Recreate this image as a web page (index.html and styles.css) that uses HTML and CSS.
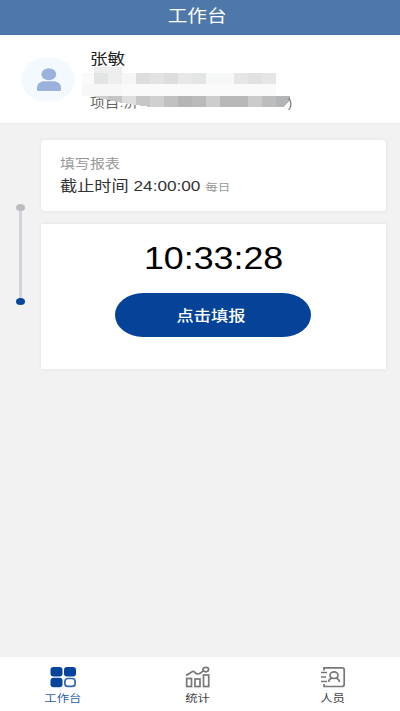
FILE: index.html
```html
<!DOCTYPE html>
<html lang="zh-CN">
<head>
<meta charset="utf-8">
<title>工作台</title>
<link rel="stylesheet" href="styles.css">
</head>
<body>
<header class="topbar"><h1 class="wide center">工作台</h1></header>
<section class="profile">
  <div class="avatar">
    <svg width="24" height="24" viewBox="0 0 24 24"><ellipse cx="11.8" cy="6.2" rx="7.4" ry="6"/><path d="M0 22v-2.500C0 15.500 3.500 13.200 7.500 13.200h9C20.500 13.200 24 15.500 24 19.500V22q0 1-1.200 1H1.200Q0 23 0 22z"/></svg>
  </div>
  <div class="info">
    <div class="name wide">张敏</div>
    <div class="project wide">项目:济</div>
    <svg class="mosaic" width="212" height="44" viewBox="0 0 212 44" shape-rendering="crispEdges">
      <path fill="#fafafa" d="M0 9h12v11H0zM12 20h182v12H12z"/>
      <path fill="#f7f7f7" d="M0 20h40v12H0z"/>
      <path fill="#ededed" d="M12 3h14v6H12zM26 3h14v6H26z"/>
      <path fill="#e3e4e4" d="M12 9h14v11H12z"/><path fill="#eeeeee" d="M26 9h14v11H26z"/>
      <path fill="#f6f6f6" d="M40 9h14v11H40z"/><path fill="#dedede" d="M54 9h14v11H54z"/>
      <path fill="#e3e3e3" d="M68 9h14v11H68z"/><path fill="#dedede" d="M82 9h14v11H82z"/>
      <path fill="#e8e8e8" d="M96 9h14v11H96z"/><path fill="#e4e5e5" d="M110 9h14v11h-14z"/>
      <path fill="#f6f7f7" d="M124 9h28v11h-28z"/><path fill="#e6e6e6" d="M152 9h14v11h-14z"/>
      <path fill="#e0e1e1" d="M166 9h14v11h-14z"/><path fill="#e6e6e6" d="M180 9h14v11h-14z"/>
      <path fill="#cfcfcf" d="M12 32h14v4l-14-3z"/><path fill="#c4c4c4" d="M26 32h14v7l-14-3z"/>
      <path fill="#dedede" d="M40 32h14v9l-14-2z"/><path fill="#c7c7c7" d="M54 32h14v11l-14-2z"/>
      <path fill="#d0d0d0" d="M68 32h14v11H68z"/><path fill="#c1c1c1" d="M82 32h14v11H82z"/>
      <path fill="#b5b5b5" d="M96 32h14v11H96z"/><path fill="#bababa" d="M110 32h14v11h-14z"/>
      <path fill="#cdcdcd" d="M124 32h14v11h-14z"/><path fill="#b8b8b8" d="M138 32h28v11h-28z"/>
      <path fill="#cbcbcb" d="M166 32h14v11h-14z"/><path fill="#bdbdbd" d="M180 32h14v11h-14z"/>
      <path fill="#b3b5b9" d="M194 32h14v4l-6 7h-8z"/>
    </svg>
    <span class="paren">)</span>
  </div>
</section>
<main>
  <div class="timeline"><i class="dot"></i><i class="line"></i><i class="dot active"></i></div>
  <div class="cards">
    <section class="card report">
      <div class="caption wide">填写报表</div>
      <div class="deadline wide">截止时间 24:00:00 <small>每日</small></div>
    </section>
    <section class="card clock">
      <div class="time wide center">10:33:28</div>
      <button><span class="wide center">点击填报</span></button>
    </section>
  </div>
</main>
<nav>
  <a class="tab on">
    <svg width="26" height="22" viewBox="0 0 26 22"><g fill="#07449b"><rect x=".5" y="1" width="12" height="9.500" rx="3"/><rect x="14" y="1" width="12" height="9.500" rx="3"/><rect x=".5" y="11.700" width="12" height="9.500" rx="3"/></g><rect x="14.900" y="12.500" width="10.200" height="7.900" rx="3" fill="#fff" stroke="#3767ae" stroke-width="1.700"/></svg>
    <span class="wide center">工作台</span>
  </a>
  <a class="tab">
    <svg width="26" height="22" viewBox="0 0 26 22" fill="none" stroke="#777" stroke-width="1.700"><rect x="1.700" y="12.500" width="4.800" height="8"/><rect x="10" y="13" width="5" height="7.500"/><rect x="18.500" y="9" width="5.200" height="11.500"/><path d="M1 9.500 7.500 5.500Q9 5 10 6.500T13 8Q16 7.500 18.500 4.500"/><ellipse cx="20.800" cy="3.600" rx="2.800" ry="2.200"/></svg>
    <span class="wide center">统计</span>
  </a>
  <a class="tab">
    <svg width="26" height="22" viewBox="0 0 26 22" fill="none" stroke="#777" stroke-width="1.700"><path d="M4 4.500V1.800h18Q24.200 1.800 24.200 3.800V18.500Q24.200 20.500 22 20.500H4V18M1 6.500h6M1 11h5M1 15.500h6"/><ellipse cx="14" cy="9.200" rx="4" ry="3.300"/><path d="M8.500 15.800Q9 12.500 12.500 12M15.500 12Q19 12.500 19.500 15.800"/></svg>
    <span class="wide center">人员</span>
  </a>
</nav>
</body>
</html>
```
FILE: styles.css
```css
* { box-sizing: border-box; }
body {
  margin: 0;
  width: 400px;
  height: 711px;
  overflow: hidden;
  display: flex;
  flex-direction: column;
  background: #f2f2f2;
  font-family: "Liberation Sans", "Noto Sans CJK SC", sans-serif;
  color: #333;
}
.wide {
  display: block;
  white-space: nowrap;
  transform: scaleX(1.17);
  transform-origin: 0 50%;
}
.center { transform-origin: 50% 50%; }
.topbar {
  height: 35px;
  padding-right: 5px;
  display: flex;
  align-items: center;
  justify-content: center;
  background: #4e77aa;
  border-bottom: 1px solid #456fa5;
}
h1 {
  margin: 0;
  font-size: 16.8px;
  line-height: 24px;
  font-weight: 400;
  color: #fff;
}
.profile {
  height: 89px;
  display: flex;
  padding: 14px 0 0 21px;
  background: #fff;
  border-bottom: 1px solid #ebebeb;
}
.avatar {
  width: 54px;
  height: 45px;
  margin-top: 8px;
  padding-left: 2px;
  border-radius: 50%;
  background: #f4f8ff;
  display: flex;
  align-items: center;
  justify-content: center;
}
.avatar svg { fill: #9bb3dc; }
.info {
  position: relative;
  margin-left: 15px;
  width: 220px;
}
.name {
  font-size: 15px;
  line-height: 20px;
  color: #222;
}
.project {
  margin-top: 25px;
  font-size: 12.6px;
  line-height: 18px;
  color: #666;
}
.mosaic {
  position: absolute;
  left: -8px;
  top: 15px;
}
.paren {
  position: absolute;
  left: 198px;
  top: 47px;
  font-size: 12px;
  line-height: 14px;
  color: #666;
}
main {
  flex: 1;
  display: flex;
  padding: 16px 14px 0 16px;
}
.timeline {
  width: 9px;
  margin-top: 64px;
  display: flex;
  flex-direction: column;
  align-items: center;
}
.dot {
  width: 9px;
  height: 7px;
  border-radius: 50%;
  background: #bcbcc1;
}
.line {
  width: 3px;
  height: 87px;
  background: #d3d3d9;
}
.active { background: #07449b; }
.cards {
  flex: 1;
  margin-left: 16px;
}
.card {
  background: #fff;
  box-shadow: 0 0 4px rgba(0, 0, 0, .07);
}
.report {
  height: 71px;
  padding: 13px 19px;
  border-radius: 4px;
}
.caption {
  font-size: 12.8px;
  line-height: 21px;
  color: #999;
}
.deadline {
  font-size: 14.7px;
  line-height: 24px;
}
small {
  font-size: 10.7px;
  color: #999;
}
.clock {
  height: 145px;
  margin-top: 13px;
  padding: 15px 0 0;
  display: flex;
  flex-direction: column;
  align-items: center;
}
.time {
  font-size: 30.6px;
  line-height: 38px;
  color: #000;
  margin-left: 1px;
}
button {
  width: 196px;
  height: 44px;
  margin: 16px 1px 0 0;
  padding: 0 4px 2px 0;
  border: 0;
  border-radius: 28px / 22px;
  background: #044398;
  color: #fff;
  font-family: inherit;
  font-size: 14.7px;
  font-weight: 500;
}
nav {
  height: 54px;
  display: flex;
  background: #fff;
}
.tab {
  width: 135px;
  flex: none;
  display: flex;
  flex-direction: column;
  align-items: center;
  padding-top: 9px;
  font-size: 10.6px;
  line-height: 16px;
  color: #444;
}
.tab:first-child { margin-left: -5px; }
.tab span { margin-top: 2px; }
.on { color: #2f60a8; }
```
